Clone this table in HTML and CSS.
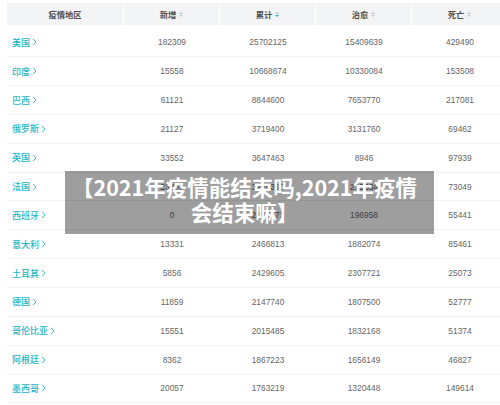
FILE: index.html
```html
<!DOCTYPE html>
<html lang="zh">
<head>
<meta charset="utf-8">
<link rel="stylesheet" href="styles.css">
</head>
<body>
<div class="page">
  <div class="table">
    <div class="row head">
      <div class="cell">疫情地区</div>
      <div class="cell">新增<span class="sort"><i class="up"></i><i class="down"></i></span></div>
      <div class="cell">累计<span class="sort active"><i class="up"></i><i class="down"></i></span></div>
      <div class="cell">治愈<span class="sort"><i class="up"></i><i class="down"></i></span></div>
      <div class="cell">死亡<span class="sort"><i class="up"></i><i class="down"></i></span></div>
    </div>
    <div class="body">
      <div class="row"><div class="cell name">美国<svg class="chev" viewBox="0 0 5 8"><path d="M1 0.8 L4 4 L1 7.2"/></svg></div><div class="cell">182309</div><div class="cell">25702125</div><div class="cell">15409639</div><div class="cell">429490</div></div>
      <div class="row"><div class="cell name">印度<svg class="chev" viewBox="0 0 5 8"><path d="M1 0.8 L4 4 L1 7.2"/></svg></div><div class="cell">15558</div><div class="cell">10668674</div><div class="cell">10330084</div><div class="cell">153508</div></div>
      <div class="row"><div class="cell name">巴西<svg class="chev" viewBox="0 0 5 8"><path d="M1 0.8 L4 4 L1 7.2"/></svg></div><div class="cell">61121</div><div class="cell">8844600</div><div class="cell">7653770</div><div class="cell">217081</div></div>
      <div class="row"><div class="cell name">俄罗斯<svg class="chev" viewBox="0 0 5 8"><path d="M1 0.8 L4 4 L1 7.2"/></svg></div><div class="cell">21127</div><div class="cell">3719400</div><div class="cell">3131760</div><div class="cell">69462</div></div>
      <div class="row"><div class="cell name">英国<svg class="chev" viewBox="0 0 5 8"><path d="M1 0.8 L4 4 L1 7.2"/></svg></div><div class="cell">33552</div><div class="cell">3647463</div><div class="cell">8946</div><div class="cell">97939</div></div>
      <div class="row"><div class="cell name">法国<svg class="chev" viewBox="0 0 5 8"><path d="M1 0.8 L4 4 L1 7.2"/></svg></div><div class="cell">23382</div><div class="cell">3226390</div><div class="cell">215634</div><div class="cell">73049</div></div>
      <div class="row"><div class="cell name">西班牙<svg class="chev" viewBox="0 0 5 8"><path d="M1 0.8 L4 4 L1 7.2"/></svg></div><div class="cell">0</div><div class="cell">2490272</div><div class="cell">196958</div><div class="cell">55441</div></div>
      <div class="row"><div class="cell name">意大利<svg class="chev" viewBox="0 0 5 8"><path d="M1 0.8 L4 4 L1 7.2"/></svg></div><div class="cell">13331</div><div class="cell">2466813</div><div class="cell">1882074</div><div class="cell">85461</div></div>
      <div class="row"><div class="cell name">土耳其<svg class="chev" viewBox="0 0 5 8"><path d="M1 0.8 L4 4 L1 7.2"/></svg></div><div class="cell">5856</div><div class="cell">2429605</div><div class="cell">2307721</div><div class="cell">25073</div></div>
      <div class="row"><div class="cell name">德国<svg class="chev" viewBox="0 0 5 8"><path d="M1 0.8 L4 4 L1 7.2"/></svg></div><div class="cell">11859</div><div class="cell">2147740</div><div class="cell">1807500</div><div class="cell">52777</div></div>
      <div class="row"><div class="cell name">哥伦比亚<svg class="chev" viewBox="0 0 5 8"><path d="M1 0.8 L4 4 L1 7.2"/></svg></div><div class="cell">15551</div><div class="cell">2015485</div><div class="cell">1832168</div><div class="cell">51374</div></div>
      <div class="row"><div class="cell name">阿根廷<svg class="chev" viewBox="0 0 5 8"><path d="M1 0.8 L4 4 L1 7.2"/></svg></div><div class="cell">8362</div><div class="cell">1867223</div><div class="cell">1656149</div><div class="cell">46827</div></div>
      <div class="row"><div class="cell name">墨西哥<svg class="chev" viewBox="0 0 5 8"><path d="M1 0.8 L4 4 L1 7.2"/></svg></div><div class="cell">20057</div><div class="cell">1763219</div><div class="cell">1320448</div><div class="cell">149614</div></div>
    </div>
  </div>
  <div class="banner">【2021年疫情能结束吗,2021年疫情<br>会结束嘛】</div>
</div>
</body>
</html>
```

FILE: styles.css
```css
html, body {
  margin: 0;
  padding: 0;
  background: #fff;
  overflow: hidden;
}
body {
  width: 500px;
  height: 405px;
  font-family: "Liberation Sans", "Noto Sans CJK SC", sans-serif;
}
.page {
  position: relative;
  padding: 3px 0 0 7px;
}
.table {
  width: 501px;
}
.row {
  display: grid;
  grid-template-columns: 117px 96px 96px 96px 96px;
  height: 28.85px;
  box-sizing: border-box;
  border-bottom: 1px solid #eff1f3;
  align-items: center;
}
.row.head {
  height: 22.4px;
  border-bottom: none;
  background: #f3f4f6;
}
.head .cell {
  height: 100%;
  display: flex;
  align-items: center;
  justify-content: center;
  border-right: 1px solid #fff;
  font-family: "Noto Sans CJK SC", sans-serif;
  font-size: 8.3px;
  font-weight: 700;
  color: #505050;
}
.body {
  padding-top: 3px;
}
.cell {
  text-align: center;
  font-size: 8.4px;
  color: #666;
}
.cell.name {
  text-align: left;
  padding-left: 5px;
  display: flex;
  align-items: center;
  font-family: "Noto Sans CJK SC", sans-serif;
  font-size: 9px;
  font-weight: 500;
  color: #22b7c5;
}
.chev {
  width: 5px;
  height: 8px;
  margin-left: 2px;
  fill: none;
  stroke: #22b7c5;
  stroke-width: 0.9;
}
.sort {
  display: inline-flex;
  flex-direction: column;
  gap: 1px;
  margin-left: 3px;
}
.sort i {
  display: block;
  width: 0;
  height: 0;
  border-left: 2px solid transparent;
  border-right: 2px solid transparent;
}
.sort .up {
  border-bottom: 2.5px solid #c3c6cc;
}
.sort .down {
  border-top: 2.5px solid #c3c6cc;
}
.sort.active .down {
  border-top-color: #22b7c5;
}
.banner {
  position: absolute;
  left: 65px;
  top: 171px;
  width: 369px;
  height: 63px;
  box-sizing: border-box;
  padding: 3px 10px 0 0;
  background: rgba(0, 0, 0, 0.38);
  color: #fff;
  text-align: center;
  font-family: "Noto Sans CJK SC", sans-serif;
  font-weight: 700;
  font-size: 21.5px;
  line-height: 25px;
  white-space: nowrap;
}
```
